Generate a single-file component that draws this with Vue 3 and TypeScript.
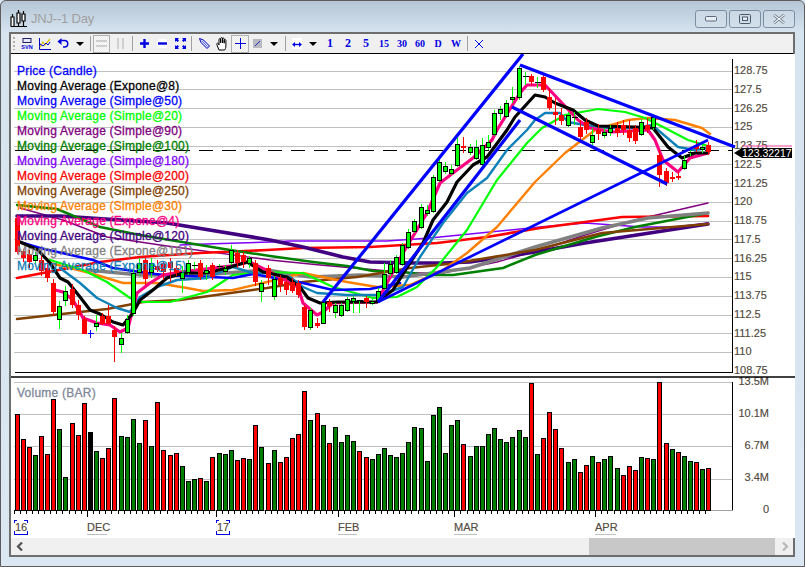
<script setup lang="ts">
type Candle = [string, number, number, number, number]
interface Line { color: string; width: number; pts: number[] }

const gapsBefore = new Set([10, 18, 26, 34, 42, 50, 58, 67, 75, 83, 91, 99, 107])
const xs: number[] = []
let cx = 17
for (let i = 1; i <= 114; i++) {
  if (i > 1) cx += gapsBefore.has(i) ? 7 : 6
  xs.push(cx)
}

const volTop = [118,193,217,241,184,238,73,163,307,145,181,85,172,229,250,220,70,184,187,133,205,136,214,82,226,241,235,274,319,313,310,319,247,235,238,226,256,250,253,151,217,265,226,262,247,190,178,49,136,115,151,205,157,202,181,199,229,247,253,238,220,241,247,235,202,157,160,259,121,97,235,151,136,208,244,214,214,178,160,193,202,187,166,187,25,238,190,112,163,220,262,253,292,271,244,262,253,244,280,301,274,286,247,250,253,22,205,223,232,244,259,262,283,280]
const volColors = ['r','r','r','g','r','r','r','g','g','r','r','r','k','g','r','r','r','g','g','g','g','r','g','r','r','r','r','g','g','g','r','g','r','g','g','g','r','r','g','r','g','r','g','r','r','r','r','r','g','r','g','r','g','g','g','g','r','r','g','g','g','g','g','g','g','g','g','g','g','g','g','g','g','r','g','g','g','g','g','g','g','g','g','g','r','g','r','r','r','r','g','g','r','r','g','r','g','g','g','r','r','r','g','r','g','r','r','g','r','g','g','r','g','r']

const bars = volTop.map((z, i) => ({
  x: xs[i] - 1.5,
  y: 375.5 + Math.round(z / 3),
  h: 510 - (375.5 + Math.round(z / 3)),
  fill: volColors[i] === 'r' ? '#ff0000' : volColors[i] === 'g' ? '#008000' : '#000000',
}))
const ticks = xs.map((x) => x - 2.5)
const monthTicks = [13, 34, 54, 73, 96].map((i) => xs[i - 1] - 2.5)

const candleData: Candle[] = [
  ['r',218,252,215,254],['r',251,258,249,262],['r',254,262,250,268],['g',255,260,252,263],['r',260,271,256,276],['r',268,278,262,282],['r',283,312,279,316],['g',306,319,301,329],['g',291,300,286,306],
  ['r',289,305,284,308],['r',305,315,300,320],['r',319,334,316,334],['b',333,333,330,338],['g',323,326,315,331],['r',316,324,313,325],['r',316,324,305,325],['r',330,337,326,362],
  ['g',338,344,333,353],['g',319,332,315,334],['g',273,313,270,316],['g',263,272,258,275],['r',260,279,258,285],['g',263,272,258,278],['r',266,270,260,272],['r',264,272,262,280],
  ['r',262,268,258,282],['r',268,273,262,276],['g',272,278,266,293],['g',263,272,260,275],['k',265,265,262,270],['r',263,277,260,280],['g',270,273,265,280],['r',265,277,263,280],
  ['k',266,266,264,268],['g',268,271,265,275],['g',250,262,245,265],['r',253,263,250,268],['r',255,262,252,268],['g',258,263,256,268],['r',263,282,260,286],['g',283,291,280,302],
  ['r',268,278,265,285],['g',279,296,276,300],['r',278,285,275,292],['r',282,290,278,295],['r',282,291,278,293],['r',283,295,280,298],['r',307,327,305,330],['g',310,327,308,330],
  ['r',323,326,318,328],['g',302,323,300,324],['r',302,306,299,312],['g',305,312,303,318],['g',305,315,303,317],['g',299,310,297,312],['g',298,301,296,313],['k',300,300,300,313],
  ['r',298,302,296,308],['g',301,303,299,305],['g',291,300,288,302],['g',274,288,263,290],['g',264,273,260,276],['g',257,272,255,274],['g',245,264,243,266],['g',232,247,229,249],['g',221,231,219,233],
  ['g',207,227,204,229],['g',210,213,205,216],['g',177,211,175,213],['g',162,180,160,182],['g',166,171,162,174],['g',169,173,165,175],['g',144,165,138,167],['r',146,148,137,153],
  ['g',147,152,144,155],['g',147,158,140,160],['g',145,164,138,166],['g',142,147,135,150],['g',113,134,110,136],['g',109,113,106,120],['g',103,116,100,118],['g',97,99,87,103],
  ['g',68,97,66,100],['k',76,76,72,85],['r',76,82,74,85],['k',82,82,77,88],['r',77,90,75,92],['r',97,108,88,110],['r',112,115,98,125],['r',115,121,108,125],
  ['g',115,125,112,127],['k',117,117,112,125],['r',127,137,120,140],['r',122,130,118,134],['g',135,142,128,145],['r',130,134,124,140],['g',132,135,128,138],['g',128,132,125,136],
  ['r',128,133,122,137],['r',125,130,120,135],['r',130,138,120,142],['r',128,141,125,144],['g',122,134,119,136],['r',125,130,118,133],['g',117,127,115,130],['r',155,175,150,187],
  ['r',171,183,168,186],['r',177,177,172,182],['r',176,176,172,180],['g',160,168,156,170],['k',152,152,148,156],['r',145,149,140,152],['g',147,149,142,153],['r',145,152,142,155],
]
const candles = candleData.map((c, i) => ({ x: xs[i] + 0.5, kind: c[0], top: c[1], bot: c[2], hi: c[3], lo: c[4] }))
const wickColor = (k: string) => (k === 'r' ? '#ff0000' : k === 'b' ? '#0000ff' : '#00ff00')

const maLines: Line[] = [
  { color: '#800080', width: 1.4, pts: [20,208,63,220,107,237,160,245,270,260,320,265,377,270,413,273,443,273,497,262,540,250,585,235,635,220,708,203] },
  { color: '#8000ff', width: 1.4, pts: [180,245,206,244,270,242,290,241,387,241,430,238,540,227,585,223,642,227,675,227,708,223] },
  { color: '#ff0000', width: 2.6, pts: [17,278,43,273,100,262,140,257,200,253,267,250,303,248,370,247,437,243,487,237,540,228,585,222,622,217,708,216] },
  { color: '#400080', width: 3.6, pts: [17,216,60,216,167,223,270,240,303,247,343,257,370,262,413,263,443,263,470,262,535,252,585,243,708,224] },
  { color: '#008000', width: 2.5, pts: [17,205,57,209,100,227,140,235,200,245,230,250,270,256,313,262,347,266,373,271,403,272,427,275,453,275,503,268,535,255,595,237,635,227,708,213] },
  { color: '#808080', width: 3.6, pts: [87,270,140,275,200,275,267,270,310,277,360,275,403,277,470,268,535,247,602,228,648,218,708,213] },
  { color: '#804000', width: 2.5, pts: [17,319,107,309,143,302,180,300,267,288,303,282,357,277,410,268,457,263,535,250,602,233,708,224] },
  { color: '#ff8000', width: 2.4, pts: [50,263,90,273,123,283,157,283,187,288,203,291,233,290,263,283,303,273,327,278,347,282,377,287,410,285,443,270,467,253,497,227,535,182,565,153,595,130,628,120,648,118,675,120,702,128,710,134] },
  { color: '#00ff00', width: 2.2, pts: [50,260,83,270,107,282,130,298,143,302,170,302,207,292,233,275,263,272,303,273,333,287,373,298,397,297,417,287,437,267,467,230,497,180,527,143,542,128,565,115,598,109,625,112,645,118,665,128,688,140,708,146] },
  { color: '#0000ff', width: 2.6, pts: [20,242,40,248,93,260,113,268,140,272,163,275,233,278,253,274,303,283,333,290,370,289,400,283] },
  { color: '#1080b8', width: 2.4, pts: [60,268,80,283,97,298,117,308,130,312,140,297,157,287,177,280,207,278,233,267,253,273,270,273,290,277,303,287,317,293,347,295,380,295,403,287,420,257,443,223,467,193,487,178,507,150,527,130,535,120,545,113,560,113,568,122,585,125,608,128,635,128,652,125,658,130,678,147,695,150,708,148] },
  { color: '#ff0080', width: 3.2, pts: [55,290,63,292,73,300,83,318,97,323,110,325,120,332,128,328,137,293,150,283,163,275,180,272,230,266,250,262,270,272,298,287,303,303,317,315,323,312,333,303,377,302,387,283,403,253,427,213,440,183,453,173,473,158,492,140,497,130,520,93,527,85,545,85,578,120,590,128,612,132,648,130,655,140,663,160,678,172,690,158,708,153] },
  { color: '#000000', width: 3.2, pts: [20,242,38,250,50,263,60,278,68,282,80,297,90,310,100,314,113,322,123,325,133,313,140,300,153,290,167,278,183,273,207,273,227,268,247,262,263,272,287,277,300,287,308,298,320,303,337,302,377,302,393,290,410,263,423,243,433,220,447,202,457,182,473,165,487,157,507,130,515,117,535,95,545,97,555,103,573,110,585,120,598,126,635,127,653,128,668,147,682,158,695,153,708,153] },
]
const lines = maLines.map((l) => {
  const p: string[] = []
  for (let i = 0; i < l.pts.length; i += 2) p.push(`${l.pts[i]},${l.pts[i + 1]}`)
  return { color: l.color, width: l.width, points: p.join(' ') }
})

const trends = [
  { x1: 323, y1: 302, x2: 523, y2: 54, w: 3.2 },
  { x1: 378, y1: 302, x2: 520, y2: 120, w: 3.2 },
  { x1: 378, y1: 302, x2: 708, y2: 140, w: 2.6 },
  { x1: 520, y1: 65, x2: 735, y2: 147, w: 3.2 },
  { x1: 512, y1: 107, x2: 667, y2: 184, w: 3.2 },
]

const gridY = Array.from({ length: 16 }, (_, i) => 71 + i * 18.77)
const priceLabels = ['128.75','127.5','126.25','125','123.75','122.5','121.25','120','118.75','117.5','116.25','115','113.75','112.5','111.25','110','108.75']
  .map((t, i) => ({ t, y: 74 + i * 18.75 }))
const volGrid = [382, 414.5, 446.5, 479]
const volLabels = [
  { t: '13.5M', y: 385 }, { t: '10.1M', y: 417 }, { t: '6.7M', y: 449 }, { t: '3.4M', y: 481 }, { t: '0', y: 513 },
]
const months = [
  { t: 'DEC', x: 87, w: 20 }, { t: 'FEB', x: 338, w: 19 }, { t: 'MAR', x: 454, w: 23 }, { t: 'APR', x: 595, w: 21 },
]
const years = [{ t: '16', x: 14 }, { t: '17', x: 216 }]

const legend = [
  { t: 'Price (Candle)', c: '#0000ff' },
  { t: 'Moving Average (Expone@8)', c: '#000000' },
  { t: 'Moving Average (Simple@50)', c: '#0000ff' },
  { t: 'Moving Average (Simple@20)', c: '#00ff00' },
  { t: 'Moving Average (Simple@90)', c: '#800080' },
  { t: 'Moving Average (Simple@100)', c: '#008000' },
  { t: 'Moving Average (Simple@180)', c: '#8000ff' },
  { t: 'Moving Average (Simple@200)', c: '#ff0000' },
  { t: 'Moving Average (Simple@250)', c: '#804000' },
  { t: 'Moving Average (Simple@30)', c: '#ff8000' },
  { t: 'Moving Average (Expone@4)', c: '#ff0080' },
  { t: 'Moving Average (Simple@120)', c: '#400080' },
  { t: 'Moving Average (Expone@161)', c: '#808080' },
  { t: 'Moving Average (Expone@15)', c: '#1080b8' },
]
const intervals = [
  { t: '1', big: true }, { t: '2', big: true }, { t: '5', big: true },
  { t: '15', big: false }, { t: '30', big: false }, { t: '60', big: false }, { t: 'D', big: false }, { t: 'W', big: false },
]
</script>

<template>
  <div class="window">
    <header class="titlebar">
      <svg class="app-icon" width="17" height="17" viewBox="0 0 17 17">
        <path d="M1 16V7h3v9M2.500 7V4M2.500 16v1M7 13V3h3v10zM8.500 3V0M8.500 13v3M12 11V4h3v7zM13.500 4V1M13.500 11v5M0.500 16.500H17" fill="#fff" stroke="#000" stroke-width="1.200" />
      </svg>
      <span class="title">JNJ--1 Day</span>
      <div class="controls">
        <button class="ctl">
          <svg width="12" height="6" viewBox="0 0 12 6"><rect x="0.500" y="0.500" width="11" height="4.500" rx="1" fill="#e8eef4" stroke="#5a6a7a" /></svg>
        </button>
        <button class="ctl">
          <svg width="12" height="10" viewBox="0 0 12 10"><rect x="0.500" y="0.500" width="11" height="9" rx="1" fill="none" stroke="#4a5a6a" /><rect x="3.500" y="3" width="5" height="3.500" fill="#e8eef4" stroke="#4a5a6a" /></svg>
        </button>
        <button class="ctl">
          <svg width="14" height="10" viewBox="0 0 14 10"><path d="M2 1l10 8M12 1L2 9" stroke="#5a6a7a" stroke-width="2.600" fill="none" /><path d="M2 1l10 8M12 1L2 9" stroke="#f4f6f8" stroke-width="1.100" fill="none" /></svg>
        </button>
      </div>
    </header>

    <main class="client">
      <div class="toolbar">
        <span class="grip"></span>
        <span class="tb w18">
          <svg width="12" height="11" viewBox="0 0 12 11">
            <rect x="2" y="0.500" width="8" height="4" fill="#e8e8ff" stroke="#202060" />
            <text x="6" y="10.500" text-anchor="middle" class="svn">SVN</text>
          </svg>
        </span>
        <span class="tb w18">
          <svg width="12" height="12" viewBox="0 0 12 12">
            <path d="M0.500 0v11.500H12" fill="none" stroke="#0000c0" />
            <path d="M1 9l3-5 2 3 5-6" fill="none" stroke="#e0c000" stroke-width="1.200" />
            <path d="M1 6l3 2 3-3 2 2 2-3" fill="none" stroke="#0000e0" />
          </svg>
        </span>
        <span class="tb w18">
          <svg width="12" height="11" viewBox="0 0 12 11">
            <path d="M4 2.500h3.500a3 3 0 0 1 0 6.500H6" fill="none" stroke="#0000e0" stroke-width="1.500" />
            <path d="M0.500 3.500L4.500 0v7z" fill="#0000e0" />
          </svg>
        </span>
        <span class="tb w16"><span class="tri"></span></span>
        <span class="sep ml2"></span>
        <span class="tb w17 pressed ml2">
          <svg width="11" height="7" viewBox="0 0 11 7"><path d="M0 1h11M0 6h11" stroke="#a8a8a8" /></svg>
        </span>
        <span class="tb w21">
          <svg width="7" height="11" viewBox="0 0 7 11"><path d="M1 0v11M6 0v11" stroke="#b0b0b0" /></svg>
        </span>
        <span class="sep ml1"></span>
        <span class="tb w18 ml2">
          <svg width="9" height="9" viewBox="0 0 9 9"><path d="M3.300 0h2.400v3.300H9v2.400H5.700V9H3.300V5.700H0V3.300h3.300z" fill="#0000e0" /></svg>
        </span>
        <span class="tb w18">
          <svg width="11" height="9" viewBox="0 0 11 9"><path d="M2 0h7l2 3v3L9 9H2L0 6V3z" fill="#fff" /><rect x="1" y="3.300" width="9" height="2.400" fill="#0000e0" /></svg>
        </span>
        <span class="tb w18">
          <svg width="11" height="11" viewBox="0 0 11 11">
            <path d="M0 4V0h4L2.800 1.200 4 2.500 2.500 4 1.200 2.800zM11 4V0H7l1.200 1.200L7 2.500 8.500 4l1.300-1.200zM0 7v4h4L2.800 9.800 4 8.500 2.500 7 1.200 8.200zM11 7v4H7l1.200-1.200L7 8.500 8.500 7l1.300 1.200z" fill="#0000e0" />
          </svg>
        </span>
        <span class="sep ml2"></span>
        <span class="tb w18 ml3">
          <svg width="11" height="11" viewBox="0 0 11 11">
            <path d="M0.500 0.500L4.500 2 10.500 8 8 10.500 2 4.500z" fill="#d8e0ff" stroke="#0000c0" />
            <path d="M3 3l5.500 5.500" stroke="#6070c0" />
          </svg>
        </span>
        <span class="tb w18">
          <svg width="13" height="14" viewBox="0 0 13 14">
            <path d="M3 13L0.800 7.500c-.5-1.200 1-1.800 1.700-.7L3 8V2.500c0-1.200 1.700-1.200 1.700 0V6V1.500c0-1.200 1.800-1.200 1.800 0V6V2c0-1.200 1.700-1.200 1.700 0v4.200V3.500c0-1.200 1.700-1.200 1.700 0V9c0 2-.7 3-1.200 4z" fill="#fff" stroke="#000" stroke-width="1" />
          </svg>
        </span>
        <span class="tb w18 pressed">
          <svg width="11" height="11" viewBox="0 0 11 11"><path d="M5.500 0v11M0 5.500h11" stroke="#0000e0" /></svg>
        </span>
        <span class="tb w16">
          <svg width="9" height="9" viewBox="0 0 9 9"><rect width="9" height="9" fill="#b8b8c0" /><path d="M2 7l5-5" stroke="#2030c0" /></svg>
        </span>
        <span class="tb w18"><span class="tri"></span></span>
        <span class="sep ml2"></span>
        <span class="tb w18 ml2">
          <svg width="10" height="11" viewBox="0 0 10 11"><rect width="10" height="11" fill="#fff" /><path d="M2.500 6.500h5" stroke="#0000e0" stroke-width="1.400" /><path d="M0 6.500L3 4v5zM10 6.500L7 4v5z" fill="#0000e0" /></svg>
        </span>
        <span class="tb w14"><span class="tri"></span></span>
        <span class="ml1"></span>
        <span v-for="iv in intervals" :key="iv.t" class="tb w18 iv" :class="{ big: iv.big }">{{ iv.t }}</span>
        <span class="sep ml2"></span>
        <span class="tb w18 ml2">
          <svg width="8" height="8" viewBox="0 0 8 8"><path d="M0 0l8 8M8 0L0 8" stroke="#0000e0" /></svg>
        </span>
      </div>

      <section class="chart">
        <svg class="plot" width="784" height="482" viewBox="11 54 784 482">
          <g shape-rendering="crispEdges">
            <line v-for="y in gridY" :key="y" x1="14" :y1="y" x2="732" :y2="y" stroke="#c0c0c0" />
            <line v-for="y in volGrid" :key="y" x1="14" :y1="y" x2="732" :y2="y" stroke="#c0c0c0" />
            <line x1="15" y1="372.500" x2="732" y2="372.500" stroke="#000" />
            <line x1="732.500" y1="59" x2="732.500" y2="373" stroke="#000" />
            <line x1="732.500" y1="382" x2="732.500" y2="511" stroke="#000" />
            <line x1="14" y1="510.500" x2="733" y2="510.500" stroke="#a0a0a0" />
            <line x1="15" y1="150.500" x2="732" y2="150.500" stroke="#000" stroke-dasharray="14 9" />
          </g>
          <polyline v-for="l in lines" :key="l.color" :points="l.points" fill="none" :stroke="l.color" :stroke-width="l.width" stroke-linejoin="round" stroke-linecap="round" />
          <g shape-rendering="crispEdges">
            <g v-for="c in candles" :key="c.x">
              <line :x1="c.x" :y1="c.hi" :x2="c.x" :y2="c.lo" :stroke="wickColor(c.kind)" />
              <rect v-if="c.kind === 'g'" :x="c.x - 2" :y="c.top + 0.5" width="4" :height="c.bot - c.top" fill="#00ff00" stroke="#000" />
              <rect v-else-if="c.kind === 'r'" :x="c.x - 2.5" :y="c.top" width="5" :height="Math.max(c.bot - c.top, 1.500)" fill="#ff0000" />
              <line v-else :x1="c.x - 3" :y1="c.top + 0.5" :x2="c.x + 3" :y2="c.top + 0.5" :stroke="c.kind === 'b' ? '#0000ff' : '#000'" />
            </g>
          </g>
          <line v-for="t in trends" :key="t.x1 + t.x2" :x1="t.x1" :y1="t.y1" :x2="t.x2" :y2="t.y2" stroke="#0000ff" :stroke-width="t.w" />
          <g shape-rendering="crispEdges">
            <rect v-for="b in bars" :key="b.x" :x="b.x" :y="b.y" width="4" :height="b.h" :fill="b.fill" stroke="#000" />
            <line v-for="t in ticks" :key="t" :x1="t" y1="510" :x2="t" y2="514" stroke="#000" />
            <line v-for="t in monthTicks" :key="t" :x1="t" y1="510" :x2="t" y2="517" stroke="#000" />
          </g>
          <text v-for="p in priceLabels" :key="p.t" x="734" :y="p.y" class="axis">{{ p.t }}</text>
          <path d="M742 146h50" stroke="#ff40a0" stroke-width="1.200" />
          <path d="M734 153l8-5h50v10h-50z" fill="#000" />
          <text x="742" y="157" class="tag">123.32217</text>
          <text v-for="p in volLabels" :key="p.t" x="769" :y="p.y" text-anchor="end" class="axis">{{ p.t }}</text>
          <line x1="11" y1="377" x2="795" y2="377" stroke="#000" stroke-width="1.400" />
          <text x="17" y="397" class="vol-title">Volume (BAR)</text>
          <g v-for="m in months" :key="m.t">
            <text :x="m.x" y="531" class="axis">{{ m.t }}</text>
            <line :x1="m.x" y1="534.500" :x2="m.x + m.w" y2="534.500" stroke="#c0c0c0" />
          </g>
          <g v-for="y in years" :key="y.t">
            <text :x="y.x + 1" y="531" class="axis">{{ y.t }}</text>
            <path :d="`M${y.x + 3} 520.500H${y.x}V523M${y.x + 10} 520.500H${y.x + 13}V523M${y.x} 531V534.500H${y.x + 13}V531`" fill="none" stroke="#0000e0" shape-rendering="crispEdges" />
          </g>
        </svg>
        <ul class="legend">
          <li v-for="item in legend" :key="item.t" class="legend-row" :style="{ color: item.c }">{{ item.t }}</li>
        </ul>
      </section>

      <div class="scrollbar">
        <span class="arrow">
          <svg width="8" height="9" viewBox="0 0 8 9"><path d="M6 0.500L2 4.500 6 8.500" fill="none" stroke="#505050" stroke-width="2.200" /></svg>
        </span>
        <div class="track"><div class="thumb"></div></div>
        <span class="arrow">
          <svg width="8" height="9" viewBox="0 0 8 9"><path d="M2 0.500L6 4.500 2 8.500" fill="none" stroke="#b8b8b8" stroke-width="2.200" /></svg>
        </span>
      </div>
    </main>
  </div>
</template>

<style>
html, body { margin: 0; padding: 0; background: #d8e4f0; }
</style>

<style scoped>
.window {
  box-sizing: border-box;
  width: 805px;
  height: 567px;
  display: flex;
  flex-direction: column;
  padding: 0 9px 9px 8px;
  border: 1px solid #5c5c5c;
  border-radius: 6px 6px 0 0;
  background: linear-gradient(to bottom, #b6c6d6 0, #d6e4f0 32px, #dbe7f2 100%);
  font-family: "Liberation Sans", Arial, sans-serif;
}
.titlebar {
  height: 31px;
  flex: none;
  display: flex;
  align-items: center;
  position: relative;
}
.app-icon { margin: 3px 0 0 1px; }
.title {
  margin: 4px 0 0 4px;
  font-size: 13px;
  letter-spacing: -0.2px;
  color: #a0a0a0;
}
.controls {
  position: absolute;
  top: 9px;
  right: 0;
  display: flex;
  gap: 2px;
}
.ctl {
  box-sizing: border-box;
  width: 32px;
  height: 18px;
  padding: 0;
  display: flex;
  align-items: center;
  justify-content: center;
  border: 1px solid #7d8ea2;
  border-radius: 3px;
  background: linear-gradient(to bottom, rgba(255,255,255,.18), rgba(255,255,255,.04));
}
.client {
  flex: 1;
  min-height: 0;
  display: flex;
  flex-direction: column;
  border: 2px solid #6e6e6e;
  background: #fff;
}
.toolbar {
  box-sizing: border-box;
  height: 20px;
  flex: none;
  display: flex;
  align-items: center;
  padding-left: 7px;
  background: #f0f0f0;
  border-bottom: 1px solid #000;
  position: relative;
}
.grip {
  position: absolute;
  left: 2px;
  top: 3px;
  width: 2px;
  height: 13px;
  background: repeating-linear-gradient(to bottom, #b0b0b0 0 2px, transparent 2px 4px);
}
.tb {
  box-sizing: border-box;
  height: 18px;
  display: flex;
  align-items: center;
  justify-content: center;
  flex: none;
}
.w14 { width: 14px; }
.w16 { width: 16px; }
.w17 { width: 17px; }
.w18 { width: 18px; }
.w21 { width: 21px; }
.ml1 { margin-left: 1px; }
.ml2 { margin-left: 2px; }
.ml3 { margin-left: 3px; }
.sep {
  width: 1px;
  height: 15px;
  background: #a0a0a0;
  flex: none;
}
.pressed {
  border: 1px solid #b0b0b0;
  background: repeating-conic-gradient(#fafafa 0 25%, #ececec 0 50%) 0 0 / 2px 2px;
}
.tri {
  width: 0;
  height: 0;
  border-left: 4px solid transparent;
  border-right: 4px solid transparent;
  border-top: 4px solid #000;
}
.svn {
  font: bold 5.500px "Liberation Sans", sans-serif;
  fill: #0000e0;
}
.iv {
  font: bold 10px "Liberation Serif", serif;
  color: #0000e0;
}
.iv.big { font-size: 12px; }
.chart {
  position: relative;
  flex: none;
  width: 784px;
  height: 484px;
  background: #fff;
  overflow: hidden;
}
.plot { display: block; }
.axis {
  font: 11px "Liberation Sans", sans-serif;
  fill: #4a4540;
  stroke: #6a5a40;
  stroke-width: 0.15px;
}
.tag {
  font: 10.500px "Liberation Sans", sans-serif;
  fill: #fff;
}
.vol-title {
  font: 12px "Liberation Sans", sans-serif;
  letter-spacing: 0.25px;
  fill: #808898;
  stroke: #808898;
  stroke-width: 0.3px;
}
.legend {
  position: absolute;
  left: 6px;
  top: 10px;
  margin: 0;
  padding: 0;
  list-style: none;
}
.legend-row {
  height: 15px;
  line-height: 15px;
  font-size: 12px;
  letter-spacing: 0.23px;
  white-space: nowrap;
  -webkit-text-stroke: 0.3px currentColor;
}
.scrollbar {
  box-sizing: border-box;
  flex: 1;
  min-height: 0;
  display: flex;
  align-items: stretch;
  background: #f0f0f0;
}
.arrow {
  width: 17px;
  flex: none;
  display: flex;
  align-items: center;
  justify-content: center;
}
.track { flex: 1; position: relative; }
.thumb {
  position: absolute;
  top: 0;
  bottom: 0;
  left: 561px;
  width: 186px;
  background: #c8c8c8;
}
</style>
